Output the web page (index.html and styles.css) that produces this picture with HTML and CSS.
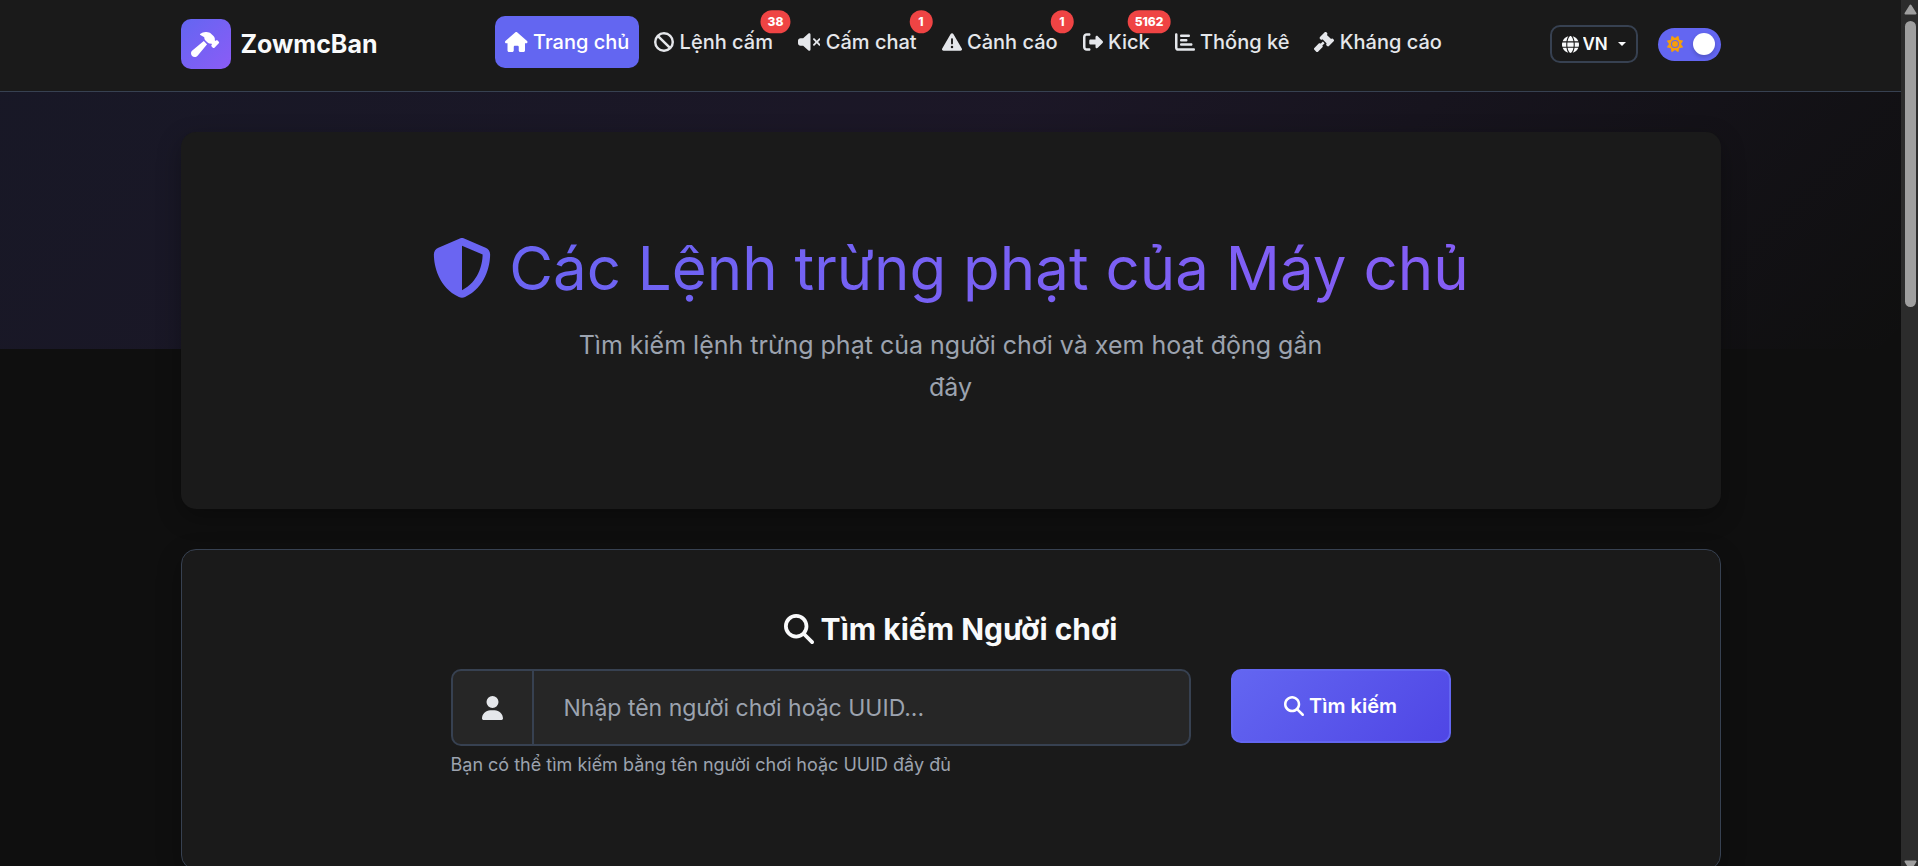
FILE: index.html
```html
<!DOCTYPE html>
<html lang="vi">
<head>
    <meta charset="UTF-8">
    <meta name="viewport" content="width=device-width, initial-scale=1.0">
    <title>ZowmcBan - Trang chủ</title>
    <link rel="stylesheet" href="styles.css">
</head>
<body>
    <div class="page">
        <header class="navbar">
            <div class="container navbar-inner">
                <a class="brand" href="#">
                    <span class="brand-logo">
                        <svg class="icon icon-wide" viewBox="0 0 576 512"><path d="M413.5 237.5c-28.2 4.8-58.2-3.6-80-25.4l-38.1-38.1C280.4 159 272 138.8 272 117.6V105.5L192.3 62c-5.3-2.9-8.6-8.6-8.3-14.7s3.9-11.5 9.5-14l47.2-21C259.1 4.2 279 0 299.2 0h18.1c36.7 0 72 14 98.7 39.1l44.6 42c24.2 22.8 33.2 55.7 26.6 86L503 183l8-8c9.4-9.4 24.6-9.4 33.9 0l24 24c9.4 9.4 9.4 24.6 0 33.9l-88 88c-9.4 9.4-24.6 9.4-33.9 0l-24-24c-9.4-9.4-9.4-24.6 0-33.9l8-8-17.5-17.5zM27.4 377.1L260.9 182.6c3.5 4.9 7.5 9.6 11.8 14l38.1 38.1c6 6 12.4 11.2 19.2 15.7L134.9 484.6c-14.5 17.4-36 27.4-58.6 27.4C34.1 512 0 477.8 0 435.7c0-22.6 10.1-44.1 27.4-58.6z"/></svg>
                    </span>
                    <span class="brand-name">ZowmcBan</span>
                </a>

                <nav class="nav">
                    <a class="nav-link active" href="#">
                        <svg class="icon icon-wide" viewBox="0 0 576 512"><path d="M575.8 255.5c0 18-15 32.1-32 32.1h-32l.7 160.2c0 2.7-.2 5.4-.5 8.1V472c0 22.1-17.9 40-40 40H456c-1.1 0-2.2 0-3.3-.1c-1.4 .1-2.8 .1-4.2 .1H416 392c-22.1 0-40-17.9-40-40V448 384c0-17.7-14.3-32-32-32H256c-17.7 0-32 14.3-32 32v64 24c0 22.1-17.9 40-40 40H160 128.1c-1.5 0-3-.1-4.5-.2c-1.2 .1-2.4 .2-3.6 .2H104c-22.1 0-40-17.9-40-40V360c0-.9 0-1.9 .1-2.8V287.6H32c-18 0-32-14-32-32.1c0-9 3-17 10-24L266.4 8c7-7 15-8 22-8s15 2 21 7L564.8 231.5c8 7 12 15 11 24z"/></svg>
                        Trang chủ
                    </a>
                    <a class="nav-link" href="#">
                        <svg class="icon" viewBox="0 0 512 512"><path d="M367.2 412.5L99.5 144.8C77.1 176.1 64 214.5 64 256c0 106 86 192 192 192c41.5 0 79.9-13.1 111.2-35.5zm45.3-45.3C434.9 335.9 448 297.5 448 256c0-106-86-192-192-192c-41.5 0-79.9 13.1-111.2 35.5L412.5 367.2zM0 256a256 256 0 1 1 512 0A256 256 0 1 1 0 256z"/></svg>
                        Lệnh cấm
                        <span class="badge">38</span>
                    </a>
                    <a class="nav-link" href="#">
                        <svg class="icon icon-wide" viewBox="0 0 576 512"><path d="M301.1 34.8C312.6 40 320 51.4 320 64V448c0 12.6-7.4 24-18.9 29.2s-25 3.1-34.4-5.3L131.8 352H64c-35.3 0-64-28.7-64-64V224c0-35.3 28.7-64 64-64h67.8L266.7 40.1c9.4-8.4 22.9-10.4 34.4-5.3zM425 167l55 55 55-55c9.4-9.4 24.6-9.4 33.9 0s9.4 24.6 0 33.9l-55 55 55 55c9.4 9.4 9.4 24.6 0 33.9s-24.6 9.4-33.9 0l-55-55-55 55c-9.4 9.4-24.6 9.4-33.9 0s-9.4-24.6 0-33.9l55-55-55-55c-9.4-9.4-9.4-24.6 0-33.9s24.6-9.4 33.9 0z"/></svg>
                        Cấm chat
                        <span class="badge">1</span>
                    </a>
                    <a class="nav-link" href="#">
                        <svg class="icon" viewBox="0 0 512 512"><path d="M256 32c14.2 0 27.3 7.5 34.5 19.8l216 368c7.3 12.4 7.3 27.7 .2 40.1S486.3 480 472 480H40c-14.3 0-27.6-7.7-34.7-20.1s-7-27.8 .2-40.1l216-368C228.7 39.5 241.8 32 256 32zm0 128c-13.3 0-24 10.7-24 24V296c0 13.3 10.7 24 24 24s24-10.7 24-24V184c0-13.3-10.7-24-24-24zm32 224a32 32 0 1 0 -64 0 32 32 0 1 0 64 0z"/></svg>
                        Cảnh cáo
                        <span class="badge">1</span>
                    </a>
                    <a class="nav-link" href="#">
                        <svg class="icon" viewBox="0 0 512 512"><path d="M377.9 105.9L500.7 228.7c7.2 7.2 11.3 17.1 11.3 27.3s-4.1 20.1-11.3 27.3L377.9 406.1c-6.4 6.4-15 9.9-24 9.9c-18.7 0-33.9-15.2-33.9-33.9l0-62.1-128 0c-17.7 0-32-14.3-32-32l0-64c0-17.7 14.3-32 32-32l128 0 0-62.1c0-18.7 15.2-33.9 33.9-33.9c9 0 17.6 3.6 24 9.9zM160 96L96 96c-17.7 0-32 14.3-32 32l0 256c0 17.7 14.3 32 32 32l64 0c17.7 0 32 14.3 32 32s-14.3 32-32 32l-64 0c-53 0-96-43-96-96L0 128C0 75 43 32 96 32l64 0c17.7 0 32 14.3 32 32s-14.3 32-32 32z"/></svg>
                        Kick
                        <span class="badge">5162</span>
                    </a>
                    <a class="nav-link" href="#">
                        <svg class="icon" viewBox="0 0 512 512"><path d="M32 32c17.7 0 32 14.3 32 32V400c0 8.8 7.2 16 16 16H480c17.7 0 32 14.3 32 32s-14.3 32-32 32H80c-44.2 0-80-35.8-80-80V64C0 46.3 14.3 32 32 32zm96 64c0-17.7 14.3-32 32-32l192 0c17.7 0 32 14.3 32 32s-14.3 32-32 32H160c-17.7 0-32-14.3-32-32zm32 80H288c17.7 0 32 14.3 32 32s-14.3 32-32 32H160c-17.7 0-32-14.3-32-32s14.3-32 32-32zm0 112H416c17.7 0 32 14.3 32 32s-14.3 32-32 32H160c-17.7 0-32-14.3-32-32s14.3-32 32-32z"/></svg>
                        Thống kê
                    </a>
                    <a class="nav-link" href="#">
                        <svg class="icon" viewBox="0 0 512 512"><path d="M318.6 9.4c-12.5-12.5-32.8-12.5-45.3 0l-120 120c-12.5 12.5-12.5 32.8 0 45.3l16 16c12.5 12.5 32.8 12.5 45.3 0l4-4L325.4 293.4l-4 4c-12.5 12.5-12.5 32.8 0 45.3l16 16c12.5 12.5 32.8 12.5 45.3 0l120-120c12.5-12.5 12.5-32.8 0-45.3l-16-16c-12.5-12.5-32.8-12.5-45.3 0l-4 4L330.6 74.6l4-4c12.5-12.5 12.5-32.8 0-45.3l-16-16zm-152 288c-12.5-12.5-32.8-12.5-45.3 0l-112 112c-12.5 12.5-12.5 32.8 0 45.3l48 48c12.5 12.5 32.8 12.5 45.3 0l112-112c12.5-12.5 12.5-32.8 0-45.3l-1.4-1.4L272 285.3 226.7 240 168 298.7l-1.4-1.4z"/></svg>
                        Kháng cáo
                    </a>
                </nav>

                <div class="nav-tools">
                    <div class="lang">
                        <svg class="icon" viewBox="0 0 512 512"><path d="M352 256c0 22.2-1.2 43.6-3.3 64H163.3c-2.2-20.4-3.3-41.8-3.3-64s1.2-43.6 3.3-64H348.7c2.2 20.4 3.3 41.8 3.3 64zm28.8-64H503.9c5.3 20.5 8.1 41.9 8.1 64s-2.8 43.5-8.1 64H380.8c2.1-20.6 3.2-42 3.2-64s-1.1-43.4-3.2-64zm112.6-32H376.7c-10-63.9-29.8-117.4-55.3-151.6c78.3 20.7 142 77.5 171.9 151.6zm-149.1 0H167.7c6.1-36.4 15.5-68.6 27-94.7c10.5-23.6 22.2-40.7 33.5-51.5C239.4 3.2 248.7 0 256 0s16.6 3.2 27.8 13.8c11.3 10.8 23 27.9 33.5 51.5c11.6 26 20.9 58.2 27 94.7zm-209 0H18.6C48.6 85.9 112.2 29.1 190.6 8.4C165.1 42.6 145.3 96.1 135.3 160zM8.1 192H131.2c-2.1 20.6-3.2 42-3.2 64s1.1 43.4 3.2 64H8.1C2.8 299.5 0 278.1 0 256s2.8-43.5 8.1-64zM194.7 446.6c-11.6-26-20.9-58.2-27-94.6H344.3c-6.1 36.4-15.5 68.6-27 94.6c-10.5 23.6-22.2 40.7-33.5 51.5C272.6 508.8 263.3 512 256 512s-16.6-3.2-27.8-13.8c-11.3-10.8-23-27.9-33.5-51.5zM135.3 352c10 63.9 29.8 117.4 55.3 151.6C112.2 482.9 48.6 426.1 18.6 352H135.3zm358.1 0c-30 74.1-93.6 130.9-171.9 151.6c25.5-34.2 45.2-87.7 55.3-151.6H493.4z"/></svg>
                        <select class="lang-select" aria-label="Ngôn ngữ">
                            <option>VN</option>
                            <option>EN</option>
                        </select>
                        <span class="caret"></span>
                    </div>
                    <label class="theme-toggle">
                        <input class="theme-input" type="checkbox" aria-label="Giao diện tối" checked>
                        <svg class="icon" viewBox="0 0 512 512"><path d="M361.5 1.2c5 2.1 8.6 6.6 9.6 11.9L391 121l107.9 19.8c5.3 1 9.8 4.6 11.9 9.6s1.5 10.7-1.6 15.2L446.9 256l62.3 90.3c3.1 4.5 3.7 10.2 1.6 15.2s-6.6 8.6-11.9 9.6L391 391 371.1 498.9c-1 5.3-4.6 9.8-9.6 11.9s-10.7 1.5-15.2-1.6L256 446.9l-90.3 62.3c-4.5 3.1-10.2 3.7-15.2 1.6s-8.6-6.6-9.6-11.9L121 391 13.1 371.1c-5.3-1-9.8-4.6-11.9-9.6s-1.5-10.7 1.6-15.2L65.1 256 2.8 165.7c-3.1-4.5-3.7-10.2-1.6-15.2s6.6-8.6 11.9-9.6L121 121 140.9 13.1c1-5.3 4.6-9.8 9.6-11.9s10.7-1.5 15.2 1.6L256 65.1 346.3 2.8c4.5-3.1 10.2-3.7 15.2-1.6zM160 256a96 96 0 1 1 192 0 96 96 0 1 1 -192 0zm224 0a128 128 0 1 0 -256 0 128 128 0 1 0 256 0z"/></svg>
                        <span class="knob"></span>
                    </label>
                </div>
            </div>
        </header>

        <main class="container main">
            <section class="hero">
                <h1 class="hero-title">
                    <svg class="icon" viewBox="0 0 512 512"><path d="M256 0c4.6 0 9.2 1 13.4 2.9L457.7 82.8c22 9.3 38.4 31 38.3 57.2c-.5 99.2-41.3 280.7-213.6 363.2c-16.7 8-36.1 8-52.8 0C57.3 420.7 16.5 239.2 16 140c-.1-26.2 16.3-47.9 38.3-57.2L242.7 2.9C246.8 1 251.4 0 256 0zm0 66.8V444.8C394 378 431.1 230.1 432 141.4L256 66.8l0 0z"/></svg>
                    Các Lệnh trừng phạt của Máy chủ
                </h1>
                <p class="hero-text">Tìm kiếm lệnh trừng phạt của người chơi và xem hoạt động gần đây</p>
            </section>

            <section class="search-card">
                <h2 class="search-title">
                    <svg class="icon" viewBox="0 0 512 512"><path d="M416 208c0 45.9-14.9 88.3-40 122.7L502.6 457.4c12.5 12.5 12.5 32.8 0 45.3s-32.8 12.5-45.3 0L330.7 376c-34.4 25.2-76.8 40-122.7 40C93.1 416 0 322.9 0 208S93.1 0 208 0S416 93.1 416 208zM208 352a144 144 0 1 0 0-288 144 144 0 1 0 0 288z"/></svg>
                    Tìm kiếm Người chơi
                </h2>
                <form class="search-form">
                    <div class="search-field">
                        <div class="input-group">
                            <label class="input-addon" for="player">
                                <svg class="icon icon-narrow" viewBox="0 0 448 512"><path d="M224 256A128 128 0 1 0 224 0a128 128 0 1 0 0 256zm-45.7 48C79.8 304 0 383.8 0 482.3C0 498.7 13.3 512 29.7 512H418.3c16.4 0 29.7-13.3 29.7-29.7C448 383.8 368.2 304 269.7 304H178.3z"/></svg>
                            </label>
                            <input class="input" id="player" type="text" placeholder="Nhập tên người chơi hoặc UUID..." aria-label="Tên người chơi" aria-describedby="player-help">
                        </div>
                        <small class="help" id="player-help">Bạn có thể tìm kiếm bằng tên người chơi hoặc UUID đầy đủ</small>
                    </div>
                    <button class="btn" type="button">
                        <svg class="icon" viewBox="0 0 512 512"><path d="M416 208c0 45.9-14.9 88.3-40 122.7L502.6 457.4c12.5 12.5 12.5 32.8 0 45.3s-32.8 12.5-45.3 0L330.7 376c-34.4 25.2-76.8 40-122.7 40C93.1 416 0 322.9 0 208S93.1 0 208 0S416 93.1 416 208zM208 352a144 144 0 1 0 0-288 144 144 0 1 0 0 288z"/></svg>
                        Tìm kiếm
                    </button>
                </form>
            </section>
        </main>
    </div>

    <div class="scrollbar" aria-hidden="true">
        <svg class="arrow" viewBox="0 0 13 11"><path d="M6.5 1.5L11.5 9.5H1.5z"/></svg>
        <div class="track"><div class="thumb"></div></div>
        <svg class="arrow arrow-down" viewBox="0 0 13 11"><path d="M6.5 9.5L11.5 1.5H1.5z"/></svg>
    </div>
</body>
</html>
```

FILE: styles.css
```css
:root {
    --primary: #6366f1;
    --accent: #8b5cf6;
    --bg: #0f0f0f;
    --card: #1a1a1a;
    --field: #262626;
    --border: #374151;
    --text: #f9fafb;
    --text-soft: #e5e7eb;
    --muted: #9ca3af;
}

* {
    box-sizing: border-box;
}

body {
    margin: 0;
    display: flex;
    height: 100vh;
    overflow: hidden;
    background: var(--bg);
    color: var(--text);
    font-family: Inter, "Noto Sans", sans-serif;
    font-size: 20px;
    line-height: 32px;
}

.page {
    flex: 1;
    position: relative;
    overflow: hidden;
}

/* tinted band behind the top of the page */
.page::before {
    content: "";
    position: absolute;
    top: 0;
    left: 0;
    right: 0;
    height: 349px;
    background: linear-gradient(135deg, rgba(99, 102, 241, 0.1) 0%, rgba(139, 92, 246, 0.1) 50%, transparent 100%);
}

.container {
    width: 90%;
    max-width: 1540px;
    margin: 0 auto;
}

.icon {
    width: 1em;
    height: 1em;
    fill: currentColor;
    vertical-align: -0.125em;
}
.icon-wide { width: 1.125em; }
.icon-narrow { width: 0.875em; }

/* Navbar */
.navbar {
    position: relative;
    background: var(--card);
    border-bottom: 1px solid var(--border);
    padding: 16px 0 19px;
}
.navbar-inner {
    display: flex;
    align-items: center;
}
.brand {
    display: flex;
    align-items: center;
    gap: 10px;
    margin-right: 20px;
    color: var(--text);
    font-size: 25px;
    font-weight: 700;
    text-decoration: none;
}
.brand-logo {
    display: flex;
    align-items: center;
    justify-content: center;
    width: 50px;
    height: 50px;
    border-radius: 10px;
    background: linear-gradient(135deg, var(--primary), var(--accent));
    color: #fff;
}
.nav {
    display: flex;
    gap: 5px;
    margin: 0 auto;
    padding-bottom: 4px;
}
.nav-link {
    position: relative;
    padding: 10px;
    border-radius: 10px;
    color: var(--text-soft);
    font-weight: 500;
    text-decoration: none;
    white-space: nowrap;
}
.nav-link.active {
    background: var(--primary);
    color: #fff;
}
.badge {
    position: absolute;
    top: 0;
    right: 0;
    transform: translate(25%, -25%);
    min-width: 23px;
    padding: 0 7px;
    border-radius: 12px;
    background: #ef4444;
    color: #fff;
    font-size: 12px;
    font-weight: 800;
    line-height: 23px;
    text-align: center;
}
.nav-tools {
    display: flex;
    align-items: center;
    gap: 20px;
}
.lang {
    display: flex;
    align-items: center;
    gap: 4px;
    height: 38px;
    padding: 0 10px;
    border: 2px solid var(--border);
    border-radius: 10px;
    font-size: 17px;
}
.lang-select {
    appearance: none;
    padding: 0;
    border: 0;
    background: none;
    color: inherit;
    font: inherit;
    font-weight: 600;
}
.caret {
    margin-left: 5px;
    border-top: 4px solid;
    border-left: 4px solid transparent;
    border-right: 4px solid transparent;
}
.theme-toggle {
    display: flex;
    align-items: center;
    justify-content: space-between;
    width: 63px;
    height: 33px;
    padding: 0 6px 0 9px;
    border-radius: 17px;
    background: var(--primary);
    color: #f59e0b;
    font-size: 16px;
}
.theme-input {
    position: absolute;
    opacity: 0;
}
.knob {
    width: 22px;
    height: 22px;
    border-radius: 50%;
    background: #fff;
    box-shadow: 0 2px 4px rgba(0, 0, 0, 0.2);
}

/* Content */
.main {
    position: relative;
    display: flex;
    flex-direction: column;
    gap: 40px;
    padding: 40px 0;
}
.hero {
    padding: 100px 60px 101px;
    border-radius: 15px;
    background: var(--card);
    box-shadow: 0 8px 25px rgba(0, 0, 0, 0.3);
    text-align: center;
}
.hero-title {
    margin: 0 0 20px;
    background: linear-gradient(135deg, var(--primary), var(--accent));
    background-clip: text;
    color: transparent;
    font-size: 60px;
    font-weight: 400;
    line-height: 72px;
}
.hero-title .icon {
    fill: #6a65f2;
}
.hero-text {
    max-width: 750px;
    margin: 0 auto;
    color: var(--muted);
    font-size: 25px;
    line-height: 42px;
}
.search-card {
    padding: 59px 60px 90px;
    border: 1px solid var(--border);
    border-radius: 15px;
    background: var(--card);
    box-shadow: 0 8px 25px rgba(0, 0, 0, 0.3);
}
.search-title {
    margin: 0 0 20px;
    font-size: 30px;
    font-weight: 700;
    line-height: 40px;
    text-align: center;
}
.search-form {
    display: grid;
    grid-template-columns: 1fr 220px;
    gap: 40px;
    align-items: start;
    max-width: 1000px;
    margin: 0 auto;
}
.input-group {
    display: flex;
    height: 77px;
    border: 2px solid var(--border);
    border-radius: 10px;
    background: var(--field);
    overflow: hidden;
}
.input-addon {
    display: flex;
    align-items: center;
    padding: 0 29px;
    border-right: 2px solid var(--border);
    color: var(--text-soft);
    font-size: 24px;
}
.input {
    flex: 1;
    min-width: 0;
    padding: 0 30px;
    border: 0;
    outline: 0;
    background: none;
    color: var(--text);
    font-family: inherit;
    font-size: 23px;
}
.input::placeholder {
    color: var(--muted);
}
.help {
    display: block;
    margin-top: 5px;
    color: var(--muted);
    font-size: 18px;
    line-height: 28px;
}
.btn {
    height: 74px;
    border: 2px solid var(--primary);
    border-radius: 10px;
    background: linear-gradient(135deg, var(--primary), #4f46e5);
    color: #fff;
    font: inherit;
    font-weight: 600;
}

/* Scrollbar */
.scrollbar {
    display: flex;
    flex-direction: column;
    align-items: center;
    gap: 6px;
    width: 17px;
    padding: 4px 0 0 2px;
    background: #2c2c2c;
}
.arrow {
    width: 13px;
    height: 11px;
    fill: #9f9f9f;
    stroke: #9f9f9f;
    stroke-width: 2;
    stroke-linejoin: round;
}
.track {
    flex: 1;
}
.thumb {
    width: 11px;
    height: 286px;
    border-radius: 6px;
    background: #9f9f9f;
}
.arrow-down {
    margin-bottom: -5px;
}
```
